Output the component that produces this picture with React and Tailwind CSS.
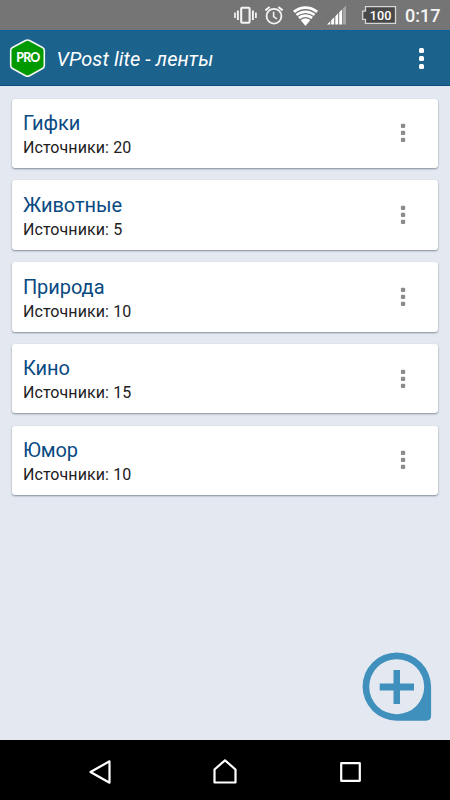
const feeds = [
  { title: 'Гифки', sources: 20 },
  { title: 'Животные', sources: 5 },
  { title: 'Природа', sources: 10 },
  { title: 'Кино', sources: 15 },
  { title: 'Юмор', sources: 10 },
];

const VibrateIcon = () => (
  <svg width="24" height="20" viewBox="0 0 24 20" fill="none" stroke="#f5f5f5">
    <rect x="8.2" y="2.8" width="8.4" height="15" rx="1" strokeWidth="2.1" />
    <path d="M4.9 5.5v9.5M19.9 5.5v9.5" strokeWidth="1.9" />
    <path d="M2 7.5v5.5M22.9 7.5v5.5" strokeWidth="1.7" />
  </svg>
);

const AlarmIcon = () => (
  <svg width="20" height="20" viewBox="0 0 20 20" fill="none" stroke="#f5f5f5" strokeWidth="1.8">
    <circle cx="10" cy="11.2" r="7.4" />
    <path d="M1.4 5.4L5.6 2M18.6 5.4l-4.2-3.4" strokeWidth="2" />
    <path d="M9.6 6.8v4.8l3.4 2.4" strokeWidth="1.5" />
  </svg>
);

const WifiIcon = () => (
  <svg width="25" height="21" viewBox="0 0 25 21">
    <path d="M0 5.7Q12.5 -3 25 5.7L12.5 21Z" fill="#fff" />
    <g fill="none" stroke="#757575" strokeWidth="1.3">
      <path d="M1.5 8.9Q12.5 .6 23.5 8.9" />
      <path d="M3.5 12.1Q12.5 5 21.5 12.1" />
      <path d="M6 15.5Q12.5 9.8 19 15.5" />
    </g>
  </svg>
);

const SignalIcon = () => (
  <svg width="20" height="20" viewBox="0 0 20 20">
    <path d="M0 19.5L3.3 16.2V19.5ZM4.2 19.5V15.3L7.2 12.3V19.5ZM8.3 19.5V11.2L11.2 8.3V19.5ZM12.2 19.5V7.3L15 4.5V19.5Z" fill="#fff" />
    <path d="M15.6 19.5V3.9L19 .6V19.5Z" fill="#a6a6a6" />
  </svg>
);

const BatteryIcon = () => (
  <svg width="36" height="20" viewBox="0 0 36 20">
    <path d="M4.5 1.7H34.5V18.3H4.5V14.3H1.7V6.2H4.5Z" fill="#484848" stroke="#d5d5d5" strokeWidth="1.3" />
    <text x="19.6" y="14.5" fill="#fff" fontFamily="Roboto, sans-serif" fontSize="13" fontWeight="500" textAnchor="middle" textLength="21.5" lengthAdjust="spacingAndGlyphs">100</text>
  </svg>
);

const ProLogo = () => (
  <svg className="ml-[9px] shrink-0" width="37" height="40" viewBox="0 0 37 40">
    <path
      d="M16.5 2.5Q18.5 1.4 20.5 2.5L33.5 9.5Q35.3 10.5 35.3 12.5V27.5Q35.3 29.5 33.5 30.5L20.5 37.7Q18.5 38.8 16.5 37.7L3.5 30.5Q1.7 29.5 1.7 27.5V12.5Q1.7 10.5 3.5 9.5Z"
      fill="#009900"
      stroke="#f2f6f2"
      strokeWidth="1.6"
    />
    <text x="7.2" y="24.4" fill="#fff" fontFamily="Lato, sans-serif" fontSize="12.3" fontWeight="900" textLength="24" lengthAdjust="spacing">PRO</text>
  </svg>
);

const MoreDots = () => (
  <svg width="6" height="20" viewBox="0 0 6 20" fill="#8c8c8c">
    <rect x="0.9" y="0.8" width="4.3" height="4.3" rx="1" />
    <rect x="0.9" y="7.8" width="4.3" height="4.3" rx="1" />
    <rect x="0.9" y="14.8" width="4.3" height="4.3" rx="1" />
  </svg>
);

const StatusBar = () => (
  <div className="flex h-[30px] items-center bg-[#757575] pl-[233px]">
    <VibrateIcon />
    <div className="ml-[7px]"><AlarmIcon /></div>
    <div className="ml-[9px]"><WifiIcon /></div>
    <div className="ml-[9px]"><SignalIcon /></div>
    <div className="ml-[14px]"><BatteryIcon /></div>
    <span className="ml-[8px] pt-px text-[18px] leading-[30px] font-medium text-[#f5f5f5]">0:17</span>
  </div>
);

const Header = () => (
  <header className="flex h-[56px] items-center border-t border-b border-t-[#08639c] border-b-[#0b4d83] bg-[#1b628d]">
    <ProLogo />
    <h1 className="ml-[10.5px] pt-[2px] text-[20px] tracking-[0.1px] text-white italic">VPost lite - ленты</h1>
    <button className="mr-[26px] ml-auto flex flex-col gap-[3px]" aria-label="Меню">
      <span className="size-[5px] rounded-[1.5px] bg-white" />
      <span className="size-[5px] rounded-[1.5px] bg-white" />
      <span className="size-[5px] rounded-[1.5px] bg-white" />
    </button>
  </header>
);

const FeedCard = ({ title, sources }) => (
  <div className="flex h-[69.5px] justify-between rounded-[3px] bg-white pl-[10.5px] shadow-[0_1px_2px_rgba(50,65,85,0.55)]">
    <div className="pt-[11.5px]">
      <h2 className="text-[20px] leading-[26px] tracking-[-0.05px] text-[#0a4a82]">{title}</h2>
      <p className="text-[16px] leading-[23.5px] tracking-[0.1px] text-[#212121]">Источники: {sources}</p>
    </div>
    <button className="mr-[31.6px] flex items-center" aria-label="Действия">
      <MoreDots />
    </button>
  </div>
);

const AddButton = () => (
  <button className="mr-[18px] mb-[19px] self-end" aria-label="Добавить">
    <svg width="70" height="69" viewBox="0 0 70 69">
      <path
        d="M34.7 .4A34.4 34.4 0 0 1 69.1 34.8V63.5Q69.1 68.7 64 68.7H34.7A34.15 34.15 0 0 1 34.7 .4ZM34.7 7.2A27.5 27.5 0 1 0 34.7 62.2A27.5 27.5 0 1 0 34.7 7.2Z"
        fill="#4090bd"
        fillRule="evenodd"
      />
      <path d="M31.5 18h6.5v13.5h14v7H38v13.5h-6.5V38.5H17.7v-7h13.8Z" fill="#4090bd" />
    </svg>
  </button>
);

const NavBar = () => (
  <nav className="h-[60px] bg-black">
    <svg width="450" height="60" viewBox="0 0 450 60" fill="none" stroke="#fff" strokeWidth="2.2" strokeLinejoin="round">
      <path d="M90.5 32L109.5 21.3V42.7Z" />
      <path d="M214.5 42.5V29.5L225 20.3L235.5 29.5V42.5Z" />
      <path d="M341.2 23.2H359.8V40.8H341.2Z" />
    </svg>
  </nav>
);

const App = () => {
  return (
    <div className="flex h-[800px] w-[450px] flex-col overflow-hidden bg-[#e4e9f1] font-['Roboto',sans-serif]">
      <StatusBar />
      <Header />
      <main className="flex flex-1 flex-col">
        <div className="flex flex-col gap-[12.25px] px-[12.4px] pt-[12.5px]">
          {feeds.map((feed) => (
            <FeedCard key={feed.title} title={feed.title} sources={feed.sources} />
          ))}
        </div>
        <div className="mt-auto flex justify-end">
          <AddButton />
        </div>
      </main>
      <NavBar />
    </div>
  );
};

export default App;
